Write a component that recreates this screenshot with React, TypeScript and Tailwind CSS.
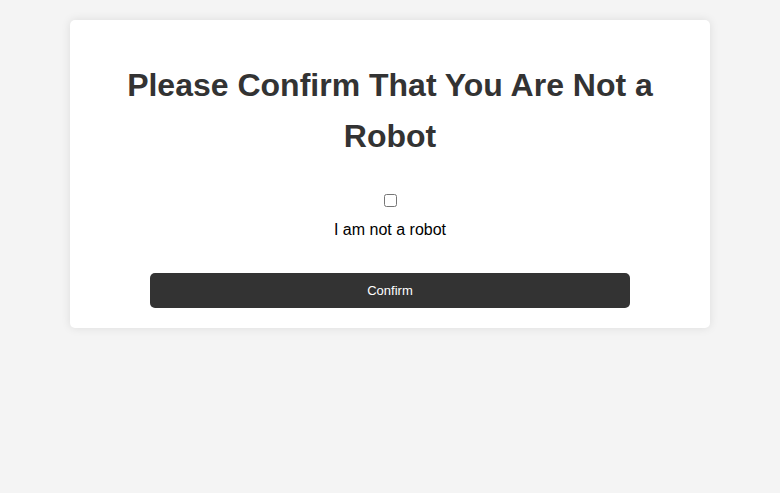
import React from "react";

export default function App() {
  return (
    <div className="min-h-screen bg-[#f4f4f4] pt-5" style={{ fontFamily: '"Liberation Sans", Arial, sans-serif' }}>
      <div className="mx-auto w-[640px] rounded-[5px] bg-white p-5 text-center shadow-[0_0_10px_rgba(0,0,0,0.1)]">
        <h1 className="mt-[20px] text-[32px] font-bold leading-[51px] text-[#333]">
          Please Confirm That You Are Not a Robot
        </h1>
        <input type="checkbox" className="mx-auto mt-[32px] block h-[13px] w-[13px]" />
        <label className="mt-[10px] block text-[16px] leading-[25.6px] text-black">I am not a robot</label>
        <button className="mx-auto mt-[30px] block h-[35px] w-[480px] rounded-[5px] bg-[#333] pt-[2px] text-[13px] text-white">
          Confirm
        </button>
      </div>
    </div>
  );
}
